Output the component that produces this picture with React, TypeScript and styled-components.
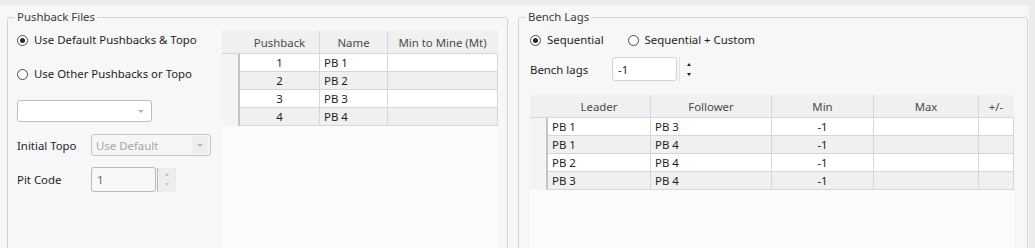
import React from 'react';
import styled, { createGlobalStyle } from 'styled-components';

const GlobalStyle = createGlobalStyle`
  html, body {
    margin: 0;
    padding: 0;
    background: #ececec;
  }
  body {
    font-family: "Noto Sans", "Open Sans", sans-serif;
    font-size: 11.4px;
    color: #1e1e1e;
  }
`;

const Screen = styled.div`
  width: 1035px;
  height: 248px;
  overflow: hidden;
  padding-top: 5px;
  box-sizing: border-box;
  background: #ececec;
`;

const Surface = styled.div`
  width: 1029px;
  height: 260px;
  padding: 4px 0 0 7px;
  box-sizing: border-box;
  background: #f7f7f7;
  display: flex;
  gap: 10px;
`;

const Group = styled.fieldset<{ $width: number }>`
  margin: 0;
  padding: 0;
  width: ${p => p.$width}px;
  height: 250px;
  box-sizing: border-box;
  border: 1px solid #d4d4d4;
  border-radius: 3px;
  min-width: 0;
`;

const Legend = styled.legend`
  margin-left: 7px;
  padding: 0 2px;
  line-height: 16px;
  color: #3a3a3a;
`;

const Body = styled.div<{ $pad: string }>`
  display: flex;
  height: 230px;
  padding: ${p => p.$pad};
  box-sizing: border-box;
`;

const Column = styled.div`
  width: 205px;
  flex-shrink: 0;
  display: flex;
  flex-direction: column;
`;

const Stack = styled.div`
  flex: 1;
  display: flex;
  flex-direction: column;
  min-width: 0;
`;

const Row = styled.div<{ $top?: number; $gap?: number; $fill?: boolean }>`
  display: flex;
  align-items: ${p => (p.$fill ? 'stretch' : 'center')};
  flex: ${p => (p.$fill ? 1 : 'none')};
  margin-top: ${p => p.$top || 0}px;
  gap: ${p => p.$gap || 0}px;
`;

const RadioLabel = styled.label`
  display: flex;
  align-items: center;
  gap: 6px;
  height: 18px;
  line-height: 18px;
  color: #1e1e1e;
  white-space: nowrap;
`;

const RadioDot = styled.span<{ $checked?: boolean }>`
  width: 11px;
  height: 11px;
  border-radius: 50%;
  border: 1px solid #4a4a4a;
  background: #fff;
  box-sizing: border-box;
  display: inline-flex;
  align-items: center;
  justify-content: center;
  flex-shrink: 0;
  &::after {
    content: '';
    width: 5px;
    height: 5px;
    border-radius: 50%;
    background: ${p => (p.$checked ? '#2a2a2a' : 'transparent')};
  }
`;

const FieldLabel = styled.span<{ $width: number }>`
  width: ${p => p.$width}px;
  flex-shrink: 0;
  color: #1e1e1e;
  white-space: nowrap;
`;

const Combo = styled.div<{ $width: number; $disabled?: boolean }>`
  width: ${p => p.$width}px;
  height: 22px;
  box-sizing: border-box;
  border: 1px solid ${p => (p.$disabled ? '#c6c6c6' : '#bdbdbd')};
  border-radius: 3px;
  background: ${p => (p.$disabled ? '#f6f6f6' : '#ffffff')};
  display: flex;
  align-items: center;
  justify-content: space-between;
  padding-left: 4px;
  color: #a6a6a6;
  overflow: hidden;
`;

const ComboButton = styled.span<{ $disabled?: boolean }>`
  width: 16px;
  height: 18px;
  margin-right: 2px;
  display: flex;
  align-items: center;
  justify-content: center;
  background: ${p => (p.$disabled ? '#ededed' : 'transparent')};
  &::after {
    content: '';
    border-left: 3px solid transparent;
    border-right: 3px solid transparent;
    border-top: 3px solid #b4b4b4;
  }
`;

const NumberBox = styled.div<{ $width: number; $disabled?: boolean }>`
  width: ${p => p.$width}px;
  height: ${p => (p.$disabled ? 25 : 24)}px;
  box-sizing: border-box;
  border: 1px solid ${p => (p.$disabled ? '#b9b9b9' : '#d2d2d2')};
  border-radius: 3px;
  background: ${p => (p.$disabled ? '#f8f8f8' : '#ffffff')};
  padding-left: 5px;
  display: flex;
  align-items: center;
  color: ${p => (p.$disabled ? '#6a6a6a' : '#1e1e1e')};
`;

const Spinner = styled.div<{ $disabled?: boolean }>`
  width: 18px;
  height: 24px;
  margin-left: ${p => (p.$disabled ? 1 : 2)}px;
  border-left: 1px solid ${p => (p.$disabled ? '#b9b9b9' : '#e2e2e2')};
  background: ${p => (p.$disabled ? '#ededed' : 'transparent')};
  display: flex;
  flex-direction: column;
  align-items: center;
  justify-content: center;
  gap: 7px;
`;

const Arrow = styled.span<{ $up?: boolean; $color: string }>`
  width: 0;
  height: 0;
  border-left: 2.5px solid transparent;
  border-right: 2.5px solid transparent;
  ${p =>
    p.$up
      ? `border-bottom: 3px solid ${p.$color};`
      : `border-top: 3px solid ${p.$color};`}
`;

const Grid = styled.div<{ $cols: string }>`
  flex: 1;
  display: grid;
  grid-template-columns: ${p => p.$cols};
  grid-auto-rows: 18px;
  grid-template-rows: 23px;
  align-content: start;
  background: #fcfcfc;
`;

const HeadCell = styled.div<{ $last?: boolean }>`
  background: #f0f0f0;
  border-bottom: 1px solid #d6d6d6;
  border-right: 1px solid ${p => (p.$last ? 'transparent' : '#d6d6d6')};
  display: flex;
  align-items: center;
  justify-content: center;
  color: #4a4a4a;
  white-space: nowrap;
`;

const Corner = styled.div`
  background: #f0f0f0;
  border-bottom: 1px solid #d6d6d6;
`;

const RowHead = styled.div`
  background: #f4f4f4;
  border-right: 2px solid #c4c4c4;
`;

const Cell = styled.div<{ $alt: boolean; $center?: boolean }>`
  background: ${p => (p.$alt ? '#f0f0f0' : '#ffffff')};
  border-bottom: 1px solid #d6d6d6;
  border-right: 1px solid #d6d6d6;
  display: flex;
  align-items: center;
  justify-content: ${p => (p.$center ? 'center' : 'flex-start')};
  padding-left: ${p => (p.$center ? 0 : 4)}px;
  color: #1e1e1e;
  line-height: 17px;
  white-space: nowrap;
`;

type Col = { title: string; center?: boolean };

const pushbackCols: Col[] = [
  { title: 'Pushback', center: true },
  { title: 'Name' },
  { title: 'Min to Mine (Mt)' },
];

const pushbackRows = [
  ['1', 'PB 1', ''],
  ['2', 'PB 2', ''],
  ['3', 'PB 3', ''],
  ['4', 'PB 4', ''],
];

const lagCols: Col[] = [
  { title: 'Leader' },
  { title: 'Follower' },
  { title: 'Min', center: true },
  { title: 'Max', center: true },
  { title: '+/-', center: true },
];

const lagRows = [
  ['PB 1', 'PB 3', '-1', '', ''],
  ['PB 1', 'PB 4', '-1', '', ''],
  ['PB 2', 'PB 4', '-1', '', ''],
  ['PB 3', 'PB 4', '-1', '', ''],
];

const DataGrid = ({ cols, widths, rows }: { cols: Col[]; widths: string; rows: string[][] }) => (
  <Grid $cols={widths}>
    <Corner />
    {cols.map((c, i) => (
      <HeadCell key={c.title} $last={i === cols.length - 1}>
        {c.title}
      </HeadCell>
    ))}
    {rows.map((r, ri) => (
      <React.Fragment key={ri}>
        <RowHead />
        {r.map((v, ci) => (
          <Cell key={ci} $alt={ri % 2 === 1} $center={cols[ci].center}>
            {v}
          </Cell>
        ))}
      </React.Fragment>
    ))}
  </Grid>
);

const Radio = ({ label, checked }: { label: string; checked?: boolean }) => (
  <RadioLabel>
    <RadioDot $checked={checked} />
    {label}
  </RadioLabel>
);

const App = () => {
  return (
    <Screen>
      <GlobalStyle />
      <Surface>
        <Group $width={501}>
          <Legend>Pushback Files</Legend>
          <Body $pad="6px 9px 0 9px">
            <Column>
              <Radio label="Use Default Pushbacks & Topo" checked />
              <Row $top={16}>
                <Radio label="Use Other Pushbacks or Topo" />
              </Row>
              <Row $top={17}>
                <Combo $width={135}>
                  <span />
                  <ComboButton />
                </Combo>
              </Row>
              <Row $top={12}>
                <FieldLabel $width={74}>Initial Topo</FieldLabel>
                <Combo $width={120} $disabled>
                  Use Default
                  <ComboButton $disabled />
                </Combo>
              </Row>
              <Row $top={11}>
                <FieldLabel $width={74}>Pit Code</FieldLabel>
                <NumberBox $width={65} $disabled>1</NumberBox>
                <Spinner $disabled>
                  <Arrow $up $color="#c4c4c4" />
                  <Arrow $color="#c4c4c4" />
                </Spinner>
              </Row>
            </Column>
            <Stack>
              <DataGrid cols={pushbackCols} widths="18px 80px 68px 1fr" rows={pushbackRows} />
            </Stack>
          </Body>
        </Group>
        <Group $width={510}>
          <Legend>Bench Lags</Legend>
          <Body $pad="6px 13px 0 11px">
            <Stack>
              <Row $gap={24}>
                <Radio label="Sequential" checked />
                <Radio label="Sequential + Custom" />
              </Row>
              <Row $top={8}>
                <FieldLabel $width={82}>Bench lags</FieldLabel>
                <NumberBox $width={65}>-1</NumberBox>
                <Spinner>
                  <Arrow $up $color="#222" />
                  <Arrow $color="#222" />
                </Spinner>
              </Row>
              <Row $top={14} $fill>
                <DataGrid
                  cols={lagCols}
                  widths="18px 103px 121px 102px 105px 1fr"
                  rows={lagRows}
                />
              </Row>
            </Stack>
          </Body>
        </Group>
      </Surface>
    </Screen>
  );
};

export default App;
